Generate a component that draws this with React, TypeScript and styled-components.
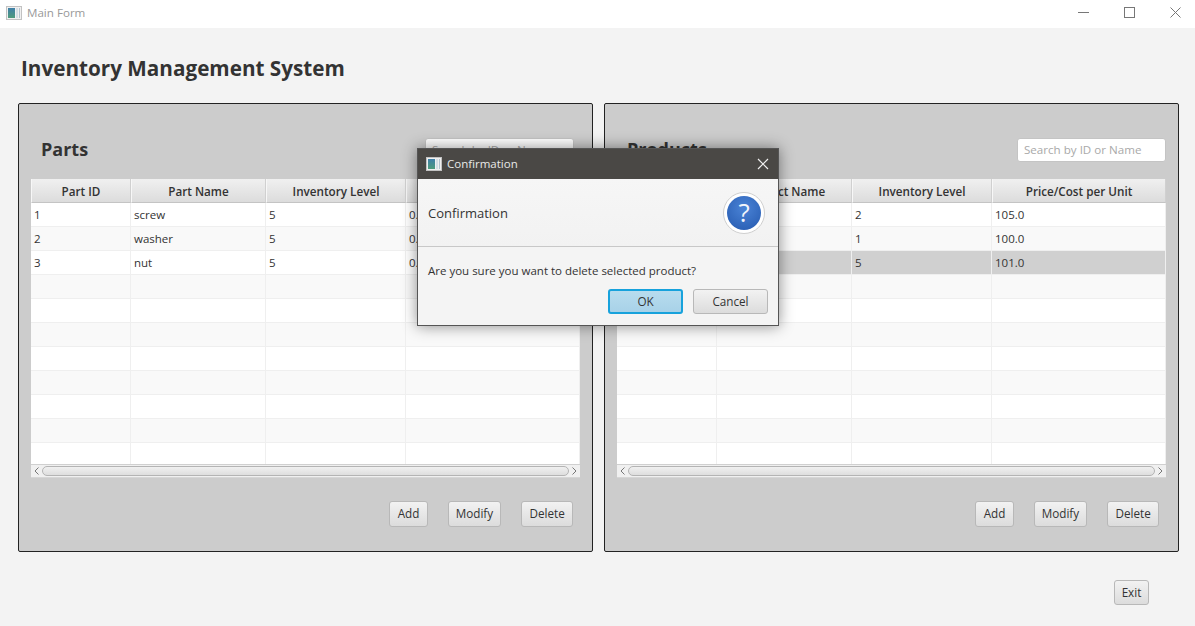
import { createGlobalStyle, styled } from "styled-components";

const UI_FONT = `"Open Sans", "Noto Sans", "Liberation Sans", sans-serif`;

const GlobalStyle = createGlobalStyle`
  html, body {
    margin: 0;
    padding: 0;
    background: #f3f3f3;
  }
  * {
    box-sizing: border-box;
  }
`;

const COLUMNS = "100px 135px 140px 174px";
const ROW_COUNT = 11;

type TableRowData = {
  id: string;
  name: string;
  level: string;
  price: string;
};

const parts: TableRowData[] = [
  { id: "1", name: "screw", level: "5", price: "0.5" },
  { id: "2", name: "washer", level: "5", price: "0.5" },
  { id: "3", name: "nut", level: "5", price: "0.5" },
];

const products: TableRowData[] = [
  { id: "1", name: "bike", level: "2", price: "105.0" },
  { id: "2", name: "scooter", level: "1", price: "100.0" },
  { id: "3", name: "wagon", level: "5", price: "101.0" },
];

const AppIcon = ({ id }: { id: string }) => (
  <svg width="16" height="16" viewBox="0 0 16 16">
    <defs>
      <linearGradient id={id} x1="0" y1="0" x2="0" y2="1">
        <stop offset="0" stopColor="#3f7fa8" />
        <stop offset="1" stopColor="#4f9c7c" />
      </linearGradient>
    </defs>
    <rect x="0.5" y="1.5" width="15" height="13" fill="#f0f0f0" stroke="#c2c2c2" />
    <rect x="2" y="3" width="7" height="10" fill={`url(#${id})`} />
    <rect x="10" y="3" width="2" height="10" fill="#d5dfe6" />
    <rect x="13" y="3" width="1" height="10" fill="#b4c4cf" />
  </svg>
);

const QuestionIcon = () => (
  <svg width="42" height="42" viewBox="0 0 42 42">
    <defs>
      <radialGradient id="questionFill" cx="0.5" cy="0.35" r="0.7">
        <stop offset="0" stopColor="#4a83d6" />
        <stop offset="1" stopColor="#2a5fb4" />
      </radialGradient>
    </defs>
    <circle cx="21" cy="21" r="20.5" fill="#fff" stroke="#cfcfcf" />
    <circle cx="21" cy="21" r="17" fill="url(#questionFill)" />
    <text x="21" y="30" textAnchor="middle" fontSize="26" fontFamily="Open Sans, sans-serif" fill="#f2f5fb">
      ?
    </text>
  </svg>
);

const Window = styled.div`
  position: relative;
  width: 1195px;
  height: 626px;
  overflow: hidden;
  background: #f3f3f3;
  color: #333;
  font-family: ${UI_FONT};
  font-size: 11.5px;
`;

const TitleBar = styled.div`
  display: flex;
  align-items: center;
  height: 28px;
  padding: 0 0 3px 6px;
  background: #fff;
`;

const TitleText = styled.span`
  margin-left: 5px;
  color: #999;
  font-size: 11.6px;
`;

const WindowControls = styled.div`
  display: flex;
  align-self: flex-start;
  gap: 6px;
  margin-left: auto;
`;

const WindowControl = styled.div`
  display: flex;
  align-items: center;
  justify-content: center;
  width: 40px;
  height: 24px;
  color: #777;
`;

const Heading = styled.h1`
  margin: 0;
  padding: 25px 0 0 21px;
  height: 75px;
  color: #333;
  font-size: 20.7px;
  line-height: 31px;
  font-weight: 700;
`;

const PanelRow = styled.div`
  display: flex;
  gap: 11px;
  padding-left: 18px;
`;

const Panel = styled.section`
  display: flex;
  flex-direction: column;
  width: 575px;
  height: 449px;
  padding: 0 12px;
  background: #ccc;
  border: 1px solid #222;
  border-radius: 2px;
`;

const PanelHead = styled.div<{ $searchInset: number }>`
  display: flex;
  align-items: center;
  justify-content: space-between;
  height: 75px;
  padding: 16px ${(p) => p.$searchInset}px 0 10px;
`;

const PanelTitle = styled.h2`
  margin: 0;
  padding-bottom: 2px;
  color: #333;
  font-size: 18px;
  font-weight: 700;
`;

const SearchBox = styled.input`
  width: 149px;
  height: 24px;
  padding: 0 6px;
  background: #fff;
  border: 1px solid #c4c4c4;
  border-radius: 3px;
  outline: none;
  font-family: inherit;
  font-size: 11.6px;

  &::placeholder {
    color: #a9a9a9;
    opacity: 1;
  }
`;

const TableFrame = styled.div`
  width: 549px;
  height: 299px;
  background: #fff;
`;

const HeaderRow = styled.div`
  display: grid;
  grid-template-columns: ${COLUMNS};
  height: 24px;
`;

const HeaderCell = styled.div`
  display: flex;
  align-items: center;
  justify-content: center;
  background: linear-gradient(#f0f0f0, #dcdcdc);
  border-right: 1px solid #d0d0d0;
  border-bottom: 1px solid #c4c4c4;
  border-left: 1px solid #f7f7f7;
  color: #333;
  font-size: 11.7px;
  font-weight: 600;
`;

const RowViewport = styled.div`
  height: 261px;
  overflow: hidden;
`;

const Row = styled.div<{ $odd: boolean; $selected?: boolean }>`
  display: grid;
  grid-template-columns: ${COLUMNS};
  height: 24px;
  background: ${(p) => (p.$selected ? "#d0d0d0" : p.$odd ? "#f9f9f9" : "#fff")};
  border-bottom: 1px solid #efefef;
`;

const Cell = styled.div`
  padding-left: 3px;
  border-right: 1px solid #efefef;
  line-height: 23px;
  white-space: nowrap;
`;

const ScrollBar = styled.div`
  display: flex;
  align-items: center;
  justify-content: space-between;
  height: 14px;
  padding: 0 3px;
  background: #f0f0f0;
  border-top: 1px solid #d0d0d0;
  border-bottom: 1px solid #d6d6d6;
`;

const ScrollThumb = styled.div`
  flex: 1;
  height: 10px;
  margin: 0 3px;
  background: linear-gradient(#f0f0f0, #dedede);
  border: 1px solid #b4b4b4;
  border-radius: 5px;
`;

const Arrow = styled.svg`
  flex: none;
  width: 5px;
  height: 8px;
  fill: none;
  stroke: #777;
  stroke-width: 1;
`;

const PanelFoot = styled.div`
  display: flex;
  justify-content: flex-end;
  gap: 20px;
  padding: 23px 7px 0 0;
`;

const Button = styled.button<{ $default?: boolean }>`
  height: 26px;
  padding: 0 7.2px 2px;
  background: ${(p) => (p.$default ? "linear-gradient(#b8dcee, #a8d2e8)" : "linear-gradient(#f2f2f2, #dcdcdc)")};
  border: ${(p) => (p.$default ? "2px solid #17a2dc" : "1px solid #b8b8b8")};
  border-radius: 3px;
  color: #333;
  font-family: inherit;
  font-size: 11.7px;
`;

const ExitRow = styled.div`
  display: flex;
  justify-content: flex-end;
  padding: 28px 46px 0 0;
`;

const ExitButton = styled(Button)`
  width: 35px;
  height: 25px;
  padding: 0 0 1px;
`;

const Dialog = styled.div`
  position: absolute;
  top: 148px;
  left: 417px;
  width: 362px;
  height: 178px;
  background: #f4f4f4;
  border: 1px solid #555;
  box-shadow: 0 0 14px rgba(0, 0, 0, 0.45);
`;

const DialogBar = styled.div`
  display: flex;
  align-items: center;
  height: 30px;
  padding: 0 9px 1px 8px;
  background: #4a4845;
  color: #e8e8e8;
`;

const DialogTitle = styled.span`
  margin-left: 5px;
`;

const DialogClose = styled.svg`
  width: 12px;
  height: 12px;
  margin-left: auto;
  stroke: #f0f0f0;
  stroke-width: 1.2;
`;

const DialogHeader = styled.div`
  display: flex;
  align-items: center;
  justify-content: space-between;
  height: 68px;
  padding: 0 13px 0 10px;
  background: linear-gradient(#f6f6f6, #f2f2f2);
  border-bottom: 1px solid #c8c8c8;
  font-size: 13px;
`;

const DialogMessage = styled.p`
  margin: 0;
  padding: 16px 10px 0;
  line-height: 16px;
`;

const DialogActions = styled.div`
  display: flex;
  justify-content: flex-end;
  gap: 10px;
  padding: 10px 10px 0 0;
`;

const DialogButton = styled(Button)`
  width: 75px;
  height: 25px;
`;

const DataTable = ({
  headers,
  rows,
  selected,
}: {
  headers: string[];
  rows: TableRowData[];
  selected?: number;
}) => (
  <TableFrame>
    <HeaderRow>
      {headers.map((h) => (
        <HeaderCell key={h}>{h}</HeaderCell>
      ))}
    </HeaderRow>
    <RowViewport>
      {Array.from({ length: ROW_COUNT }).map((_, i) => {
        const r = rows[i];
        return (
          <Row key={i} $odd={i % 2 === 1} $selected={i === selected}>
            <Cell>{r?.id}</Cell>
            <Cell>{r?.name}</Cell>
            <Cell>{r?.level}</Cell>
            <Cell>{r?.price}</Cell>
          </Row>
        );
      })}
    </RowViewport>
    <ScrollBar>
      <Arrow viewBox="0 0 5 8">
        <path d="M4.5 0.5 L1 4 L4.5 7.5" />
      </Arrow>
      <ScrollThumb />
      <Arrow viewBox="0 0 5 8">
        <path d="M0.5 0.5 L4 4 L0.5 7.5" />
      </Arrow>
    </ScrollBar>
  </TableFrame>
);

const InventoryPanel = ({
  title,
  headers,
  rows,
  selected,
  searchInset,
}: {
  title: string;
  headers: string[];
  rows: TableRowData[];
  selected?: number;
  searchInset: number;
}) => (
  <Panel>
    <PanelHead $searchInset={searchInset}>
      <PanelTitle>{title}</PanelTitle>
      <SearchBox placeholder="Search by ID or Name" />
    </PanelHead>
    <DataTable headers={headers} rows={rows} selected={selected} />
    <PanelFoot>
      <Button>Add</Button>
      <Button>Modify</Button>
      <Button>Delete</Button>
    </PanelFoot>
  </Panel>
);

export default function App() {
  return (
    <Window>
      <GlobalStyle />
      <TitleBar>
        <AppIcon id="mainIconFill" />
        <TitleText>Main Form</TitleText>
        <WindowControls>
          <WindowControl>
            <svg width="11" height="11" viewBox="0 0 11 11" stroke="currentColor" fill="none">
              <path d="M0 5.5 H11" />
            </svg>
          </WindowControl>
          <WindowControl>
            <svg width="11" height="11" viewBox="0 0 11 11" stroke="currentColor" fill="none">
              <rect x="0.5" y="0.5" width="10" height="10" />
            </svg>
          </WindowControl>
          <WindowControl>
            <svg width="11" height="11" viewBox="0 0 11 11" stroke="currentColor" fill="none">
              <path d="M0.5 0.5 L10.5 10.5 M10.5 0.5 L0.5 10.5" />
            </svg>
          </WindowControl>
        </WindowControls>
      </TitleBar>

      <Heading>Inventory Management System</Heading>

      <PanelRow>
        <InventoryPanel
          title="Parts"
          headers={["Part ID", "Part Name", "Inventory Level", "Price/Cost per Unit"]}
          rows={parts}
          searchInset={6}
        />
        <InventoryPanel
          title="Products"
          headers={["Product ID", "Product Name", "Inventory Level", "Price/Cost per Unit"]}
          rows={products}
          selected={2}
          searchInset={0}
        />
      </PanelRow>

      <ExitRow>
        <ExitButton>Exit</ExitButton>
      </ExitRow>

      <Dialog>
        <DialogBar>
          <AppIcon id="dialogIconFill" />
          <DialogTitle>Confirmation</DialogTitle>
          <DialogClose viewBox="0 0 12 12">
            <path d="M1 1 L11 11 M11 1 L1 11" />
          </DialogClose>
        </DialogBar>
        <DialogHeader>
          <span>Confirmation</span>
          <QuestionIcon />
        </DialogHeader>
        <DialogMessage>Are you sure you want to delete selected product?</DialogMessage>
        <DialogActions>
          <DialogButton $default>OK</DialogButton>
          <DialogButton>Cancel</DialogButton>
        </DialogActions>
      </Dialog>
    </Window>
  );
}
